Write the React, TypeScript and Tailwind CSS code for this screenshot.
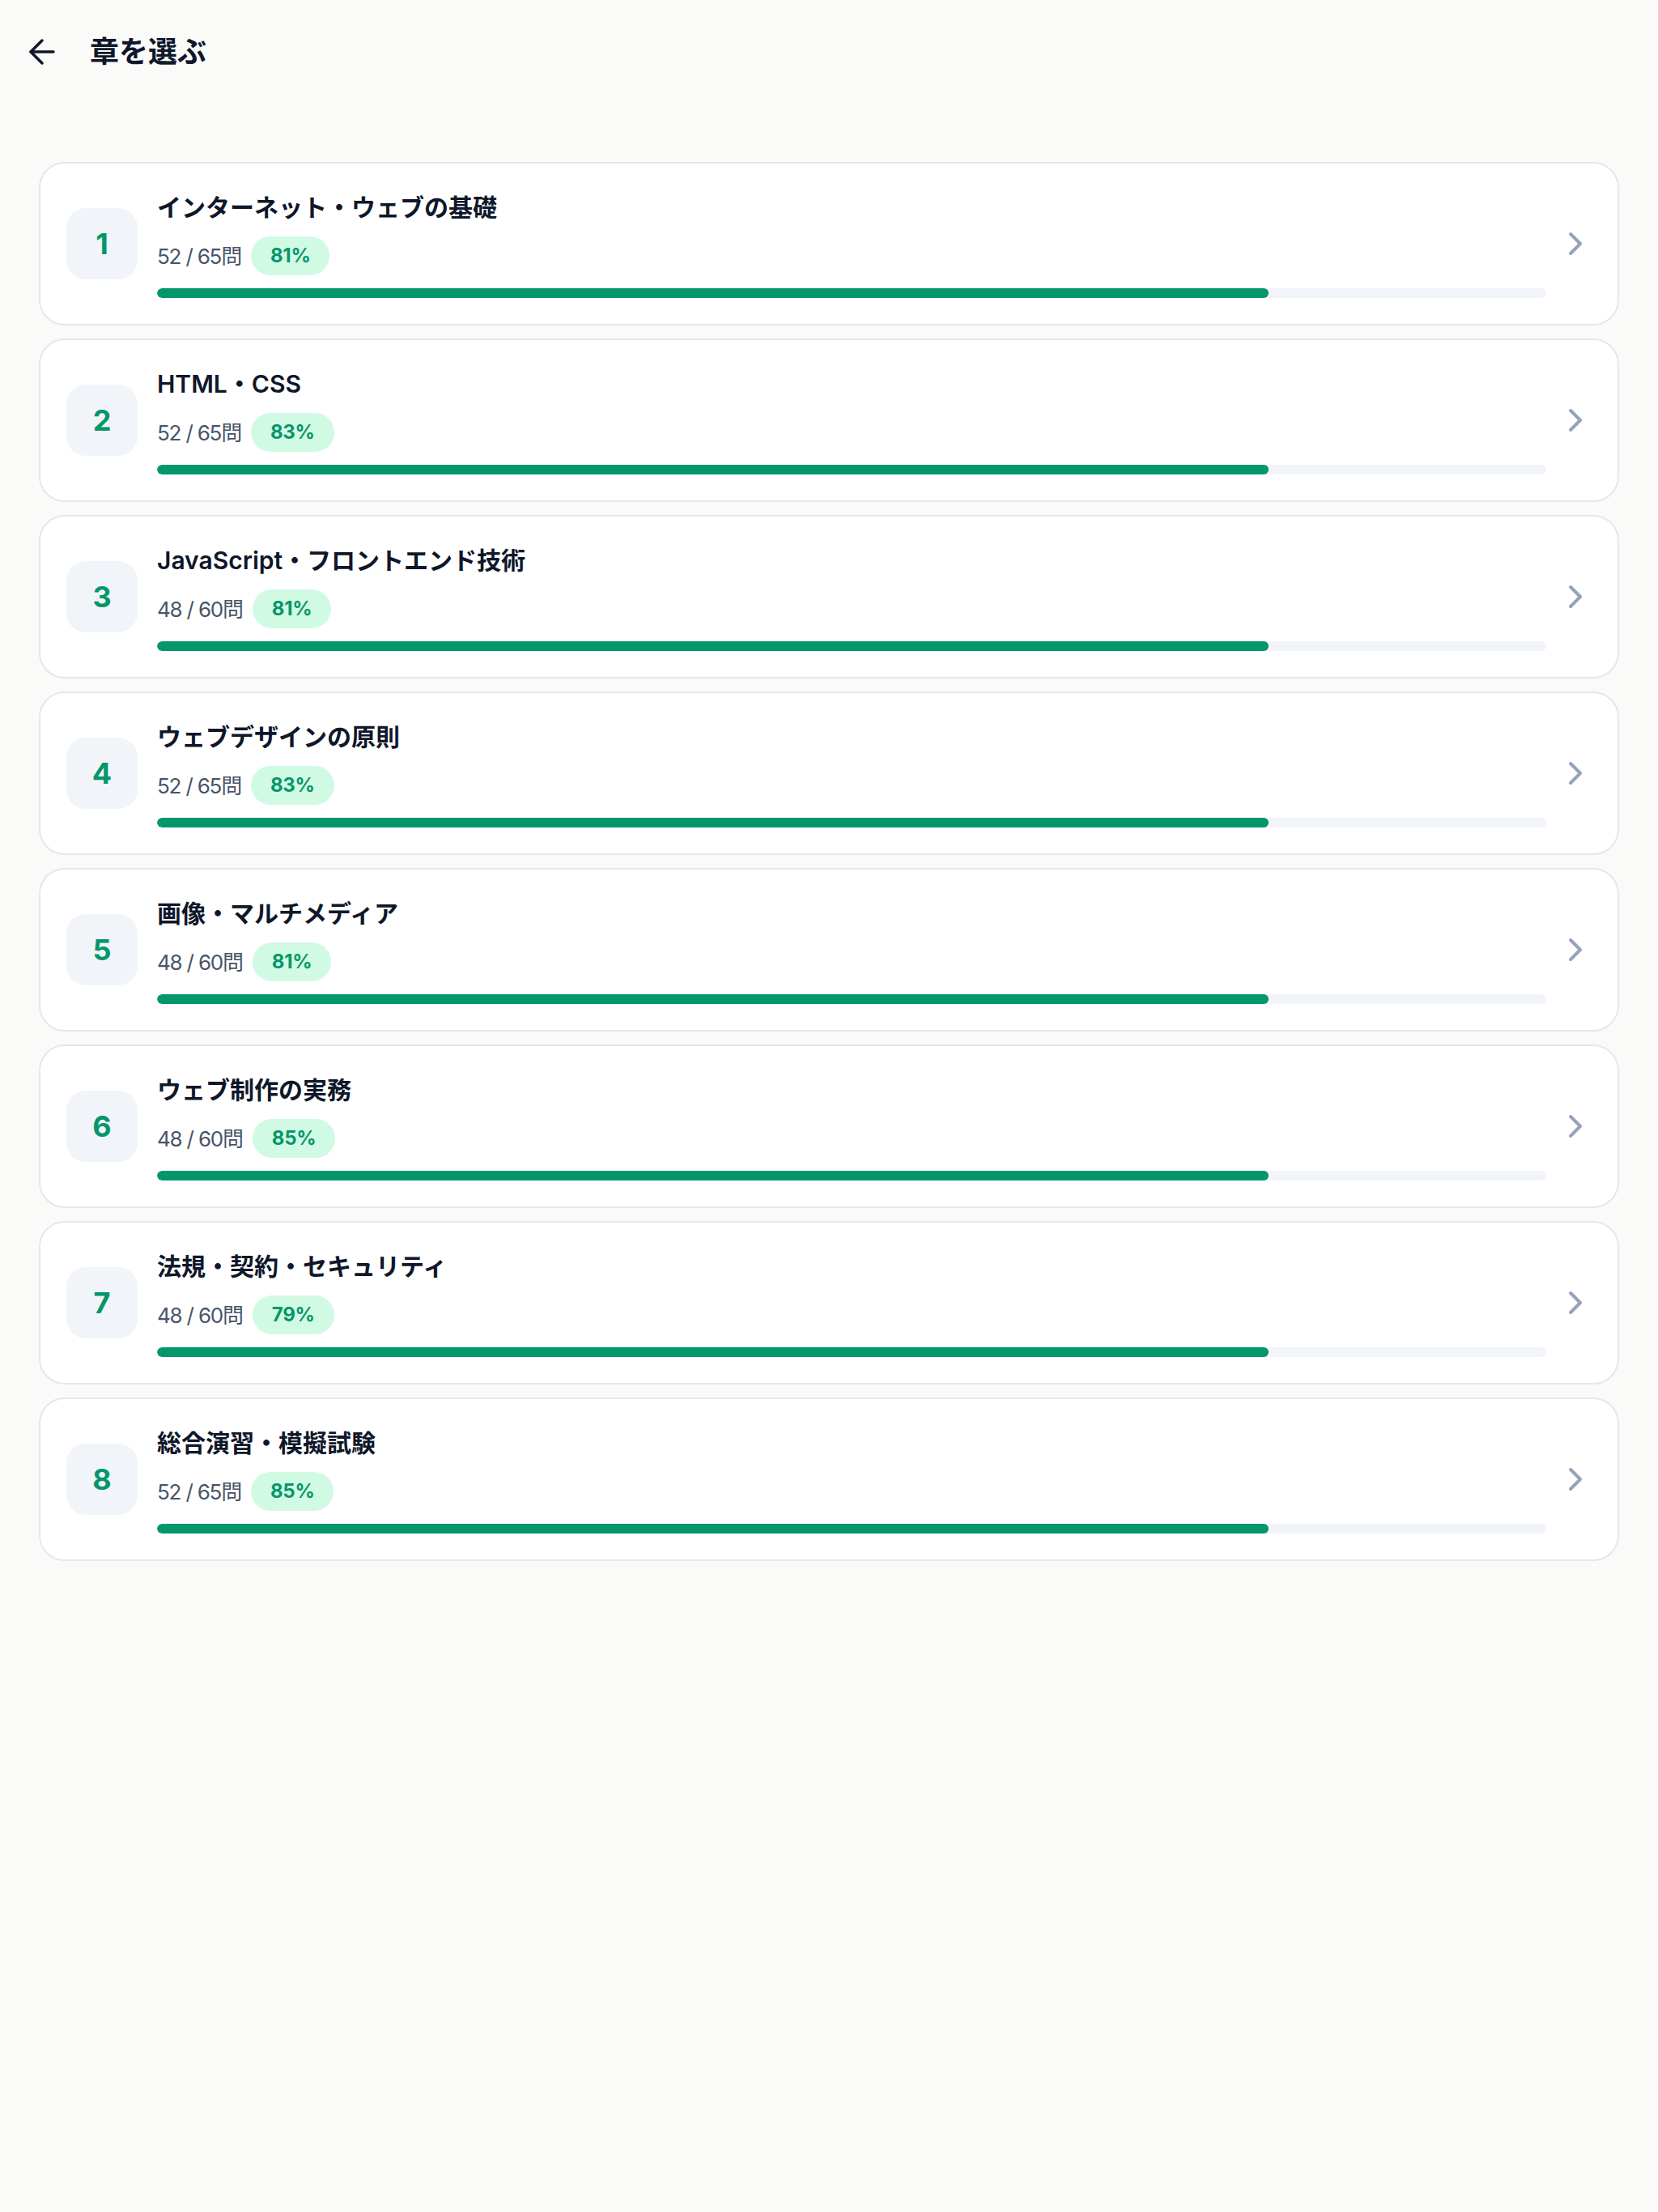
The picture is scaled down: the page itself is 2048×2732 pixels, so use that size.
import React from 'react';
import { ArrowLeft, ChevronRight } from 'lucide-react';

interface Chapter {
  no: number;
  title: string;
  answered: number;
  total: number;
  rate: number;
}

const chapters: Chapter[] = [
  { no: 1, title: 'インターネット・ウェブの基礎', answered: 52, total: 65, rate: 81 },
  { no: 2, title: 'HTML・CSS', answered: 52, total: 65, rate: 83 },
  { no: 3, title: 'JavaScript・フロントエンド技術', answered: 48, total: 60, rate: 81 },
  { no: 4, title: 'ウェブデザインの原則', answered: 52, total: 65, rate: 83 },
  { no: 5, title: '画像・マルチメディア', answered: 48, total: 60, rate: 81 },
  { no: 6, title: 'ウェブ制作の実務', answered: 48, total: 60, rate: 85 },
  { no: 7, title: '法規・契約・セキュリティ', answered: 48, total: 60, rate: 79 },
  { no: 8, title: '総合演習・模擬試験', answered: 52, total: 65, rate: 85 },
];

function ChapterCard({ chapter }: { chapter: Chapter }) {
  const progress = (chapter.answered / chapter.total) * 100;

  return (
    <button className="flex w-full items-center rounded-[32px] border-2 border-[#e2e8f0] bg-white py-[32px] pl-[32px] pr-[28px] text-left">
      <div className="flex h-[88px] w-[88px] shrink-0 items-center justify-center rounded-[24px] bg-[#f1f5f9] text-[36px] font-bold text-[#059669]">
        {chapter.no}
      </div>
      <div className="ml-[24px] min-w-0 flex-1">
        <div className="text-[30px] font-semibold leading-[44px] text-[#0f172a]">{chapter.title}</div>
        <div className="mt-[14px] flex h-[48px] items-center gap-[12px]">
          <span className="text-[26px] tracking-[-1.2px] text-[#475569]">
            {chapter.answered} / {chapter.total}問
          </span>
          <span className="flex h-[48px] items-center rounded-full bg-[#d1fae5] px-[24px] text-[24px] font-bold tracking-[-0.3px] text-[#059669]">
            {chapter.rate}%
          </span>
        </div>
        <div className="mt-[16px] h-[12px] w-full overflow-hidden rounded-full bg-[#f1f5f9]">
          <div className="h-full rounded-full bg-[#059669]" style={{ width: `${progress}%` }} />
        </div>
      </div>
      <ChevronRight className="ml-[12px] shrink-0 text-[#94a3b8]" size={48} strokeWidth={2} />
    </button>
  );
}

export default function App() {
  return (
    <div
      className="min-h-[2732px] w-full bg-[#fafaf9]"
      style={{ fontFamily: 'Inter, "Noto Sans CJK JP", sans-serif' }}
    >
      <header className="flex h-[128px] items-center px-[28px]">
        <button className="flex h-[48px] w-[48px] items-center justify-center text-[#0f172a]">
          <ArrowLeft size={48} strokeWidth={1.75} />
        </button>
        <h1 className="ml-[35px] text-[36px] font-bold text-[#0f172a]">章を選ぶ</h1>
      </header>

      <main className="flex flex-col gap-[16px] px-[48px] pt-[72px]">
        {chapters.map((c) => (
          <ChapterCard key={c.no} chapter={c} />
        ))}
      </main>
    </div>
  );
}
